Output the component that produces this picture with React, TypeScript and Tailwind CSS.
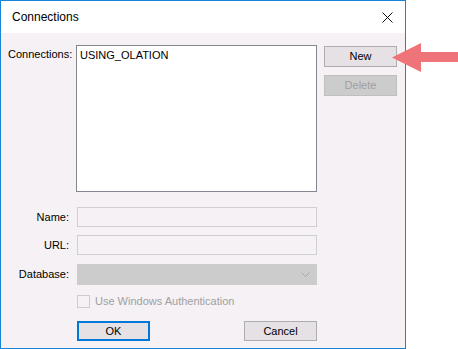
import React from 'react'

const font = { fontFamily: '"Liberation Sans", Arial, sans-serif' }

function Field({ label, children, className = '' }: { label: string; children: React.ReactNode; className?: string }) {
  return (
    <div className={`flex items-center ${className}`}>
      <div className="w-[69px] pr-[8px] text-right text-[11px] text-black">{label}</div>
      {children}
    </div>
  )
}

export default function App() {
  return (
    <div className="relative w-[458px] h-[349px] bg-white overflow-hidden" style={font}>
      <div className="w-[406px] h-[349px] border border-[#1883d7] flex flex-col">
        {/* title bar */}
        <div className="h-[32px] bg-white flex items-center justify-between pl-[11px] pr-[11px]">
          <span className="text-[12px] text-black">Connections</span>
          <svg width="11" height="11" viewBox="0 0 11 11" className="mr-[1px]">
            <path d="M0.5 0.5 L10.5 10.5 M10.5 0.5 L0.5 10.5" stroke="#111" strokeWidth="1" />
          </svg>
        </div>

        {/* body */}
        <div className="flex-1 bg-[#f5f1f5] pl-[7px] pt-[12px]">
          <div className="flex items-start">
            <div className="w-[68px] pt-[1px] text-[11px] text-black">Connections:</div>
            <div className="w-[241px] h-[147px] bg-white border border-[#828790] px-[3px] pt-[1px] text-[11px] text-black">
              USING_OLATION
            </div>
            <div className="ml-[7px] mt-[1px] flex flex-col gap-[8px]">
              <button className="w-[73px] h-[21px] bg-[#e5e1e5] border border-[#adadad] text-[11px] text-black">New</button>
              <button className="w-[73px] h-[21px] bg-[#cccccc] border border-[#bfbfbf] text-[11px] text-[#a0a0a0]">Delete</button>
            </div>
          </div>

          <Field label="Name:" className="mt-[15px]">
            <div className="w-[240px] h-[20px] border border-[#cfcfcf] bg-[#f5f1f5]" />
          </Field>
          <Field label="URL:" className="mt-[8px]">
            <div className="w-[240px] h-[20px] border border-[#cfcfcf] bg-[#f5f1f5]" />
          </Field>
          <Field label="Database:" className="mt-[9px]">
            <div className="w-[240px] h-[21px] border border-[#cccccc] bg-[#cccccc] flex items-center justify-end pr-[6px]">
              <svg width="9" height="5" viewBox="0 0 9 5">
                <path d="M0.5 0.5 L4.5 4.5 L8.5 0.5" stroke="#a8a8a8" strokeWidth="1" fill="none" />
              </svg>
            </div>
          </Field>

          <div className="mt-[10px] ml-[69px] h-[13px] flex items-center gap-[5px]">
            <div className="w-[13px] h-[13px] border border-[#cccccc] bg-[#f5f1f5]" />
            <span className="text-[11px] leading-none text-[#a0a0a0]">Use Windows Authentication</span>
          </div>

          <div className="mt-[13px] ml-[69px] flex w-[240px] justify-between">
            <button className="w-[73px] h-[20px] bg-[#e5e1e5] border-2 border-[#0078d7] text-[11px] text-black">OK</button>
            <button className="w-[73px] h-[20px] bg-[#e5e1e5] border border-[#adadad] text-[11px] text-black">Cancel</button>
          </div>
        </div>
      </div>

      {/* annotation arrow */}
      <svg className="absolute left-[392px] top-[43px]" width="66" height="29" viewBox="0 0 66 29">
        <polygon points="0,14.5 29,0 29,9 66,9 66,19 29,19 29,29" fill="#ee747a" />
      </svg>
    </div>
  )
}
